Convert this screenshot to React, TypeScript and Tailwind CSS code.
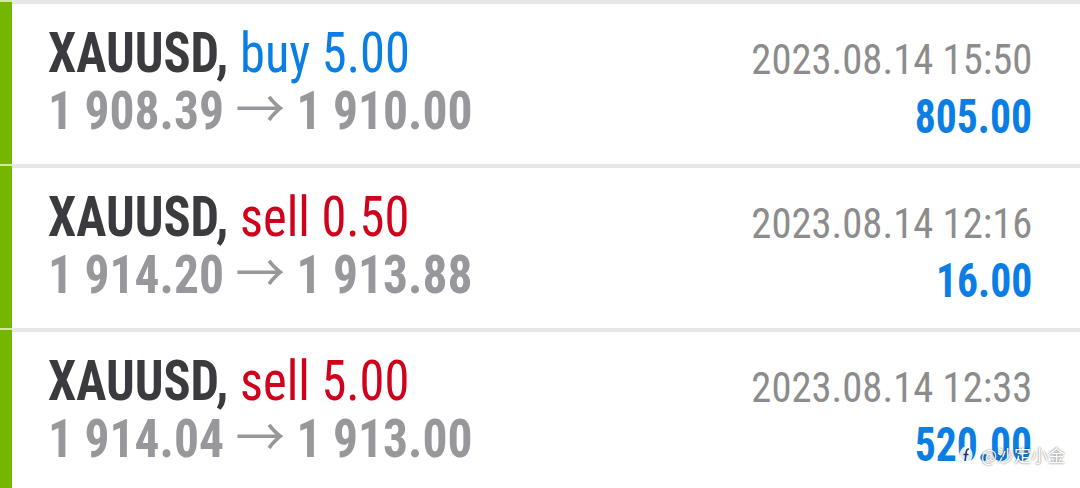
import React from 'react';

interface Trade {
  id: string;
  symbol: string;
  side: 'buy' | 'sell';
  volume: string;
  openPrice: string;
  closePrice: string;
  time: string;
  profit: string;
}

const trades: Trade[] = [
  {
    id: 't1',
    symbol: 'XAUUSD',
    side: 'buy',
    volume: '5.00',
    openPrice: '1 908.39',
    closePrice: '1 910.00',
    time: '2023.08.14 15:50',
    profit: '805.00',
  },
  {
    id: 't2',
    symbol: 'XAUUSD',
    side: 'sell',
    volume: '0.50',
    openPrice: '1 914.20',
    closePrice: '1 913.88',
    time: '2023.08.14 12:16',
    profit: '16.00',
  },
  {
    id: 't3',
    symbol: 'XAUUSD',
    side: 'sell',
    volume: '5.00',
    openPrice: '1 914.04',
    closePrice: '1 913.00',
    time: '2023.08.14 12:33',
    profit: '520.00',
  },
];

const font = { fontFamily: '"Roboto Condensed", Roboto, "Noto Sans CJK SC", sans-serif' };

function TradeRow({ trade }: { trade: Trade }) {
  return (
    <div className="flex h-[164px] bg-white">
      {/* closed position marker */}
      <div className="w-[12px] shrink-0 bg-[#74b600] border-t-2 border-[#cfe6a8]" />
      <div className="flex flex-1 justify-between border-t-4 border-[#e7e7e7]">
        <div className="pl-[36px] pt-[20px]">
          <div className="text-[56px] leading-[58px] whitespace-nowrap origin-left scale-x-[0.9]">
            <span className="font-bold text-[#3a3a3f]">{trade.symbol}, </span>
            <span className={trade.side === 'buy' ? 'text-[#0a7ee3]' : 'text-[#d0011b]'}>
              {trade.side} {trade.volume}
            </span>
          </div>
          <div className="text-[53px] leading-[58px] font-bold text-[#98989c] whitespace-nowrap origin-left scale-x-[0.935]">
            {trade.openPrice} <span className="font-normal">→</span> {trade.closePrice}
          </div>
        </div>
        <div className="pr-[48px] pt-[26px] flex flex-col items-end">
          <div className="text-[43px] leading-[58px] text-[#8c8c8c] whitespace-nowrap origin-right scale-x-[0.945]">
            {trade.time}
          </div>
          <div className="text-[49px] leading-[58px] font-bold text-[#0a7ee3] origin-right scale-x-[0.85]">
            {trade.profit}
          </div>
        </div>
      </div>
    </div>
  );
}

export default function App() {
  return (
    <div className="relative w-[1080px] h-[488px] overflow-hidden bg-white" style={font}>
      {trades.map(trade => (
        <TradeRow key={trade.id} trade={trade} />
      ))}

      {/* watermark */}
      <div
        className="absolute left-[959px] top-[445px] flex items-center gap-[8px] whitespace-nowrap text-[17px] leading-[20px] text-white [text-shadow:0_0_2px_rgba(0,0,0,0.7)]"
        style={{ fontFamily: '"Noto Sans CJK SC", sans-serif' }}
      >
        <svg width="14" height="20" viewBox="0 0 14 20">
          <ellipse cx="7" cy="10" rx="6.5" ry="8.5" fill="white" fillOpacity="0.85" />
          <path d="M10 4 C7 4 7 7 7 9 L6 16 M4.5 9.5 L9.5 9.5" stroke="#1d3560" strokeWidth="1.6" fill="none" />
        </svg>
        <span>@沙定小金</span>
      </div>
    </div>
  );
}
